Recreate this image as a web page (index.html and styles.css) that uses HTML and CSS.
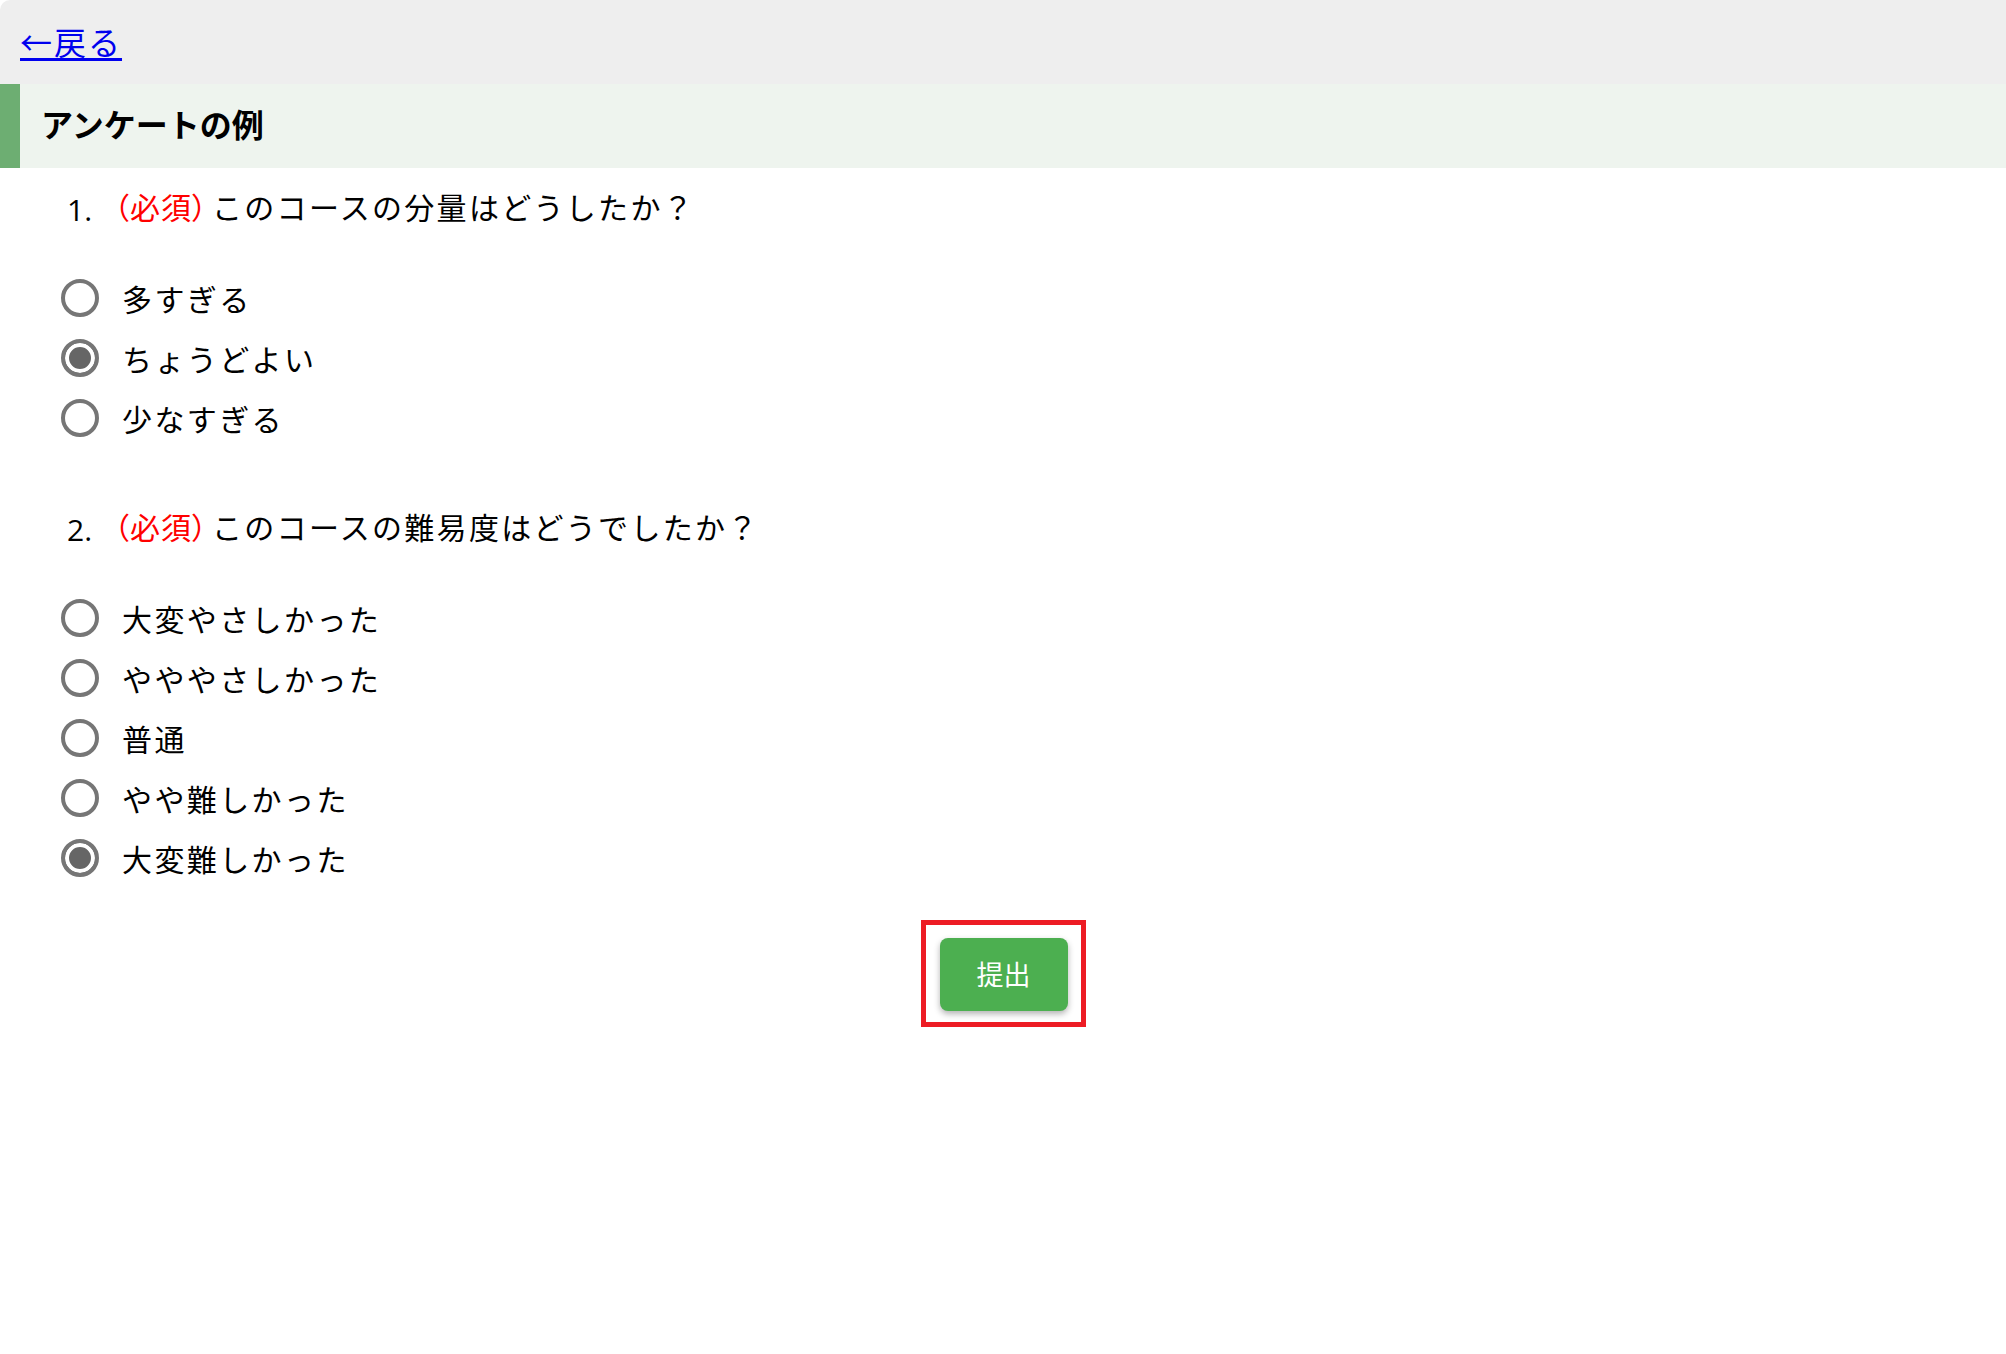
FILE: index.html
```html
<!DOCTYPE html>
<html lang="ja">
<head>
    <meta charset="UTF-8">
    <meta name="viewport" content="width=device-width, initial-scale=1.0">
    <title>アンケートの例</title>
    <link rel="stylesheet" href="styles.css">
</head>
<body>
    <header class="topbar">
        <a href="#" class="back-link">←戻る</a>
    </header>

    <div class="page-title">
        <h1>アンケートの例</h1>
    </div>

    <form id="surveyForm" class="survey">
        <div class="question">
            <p class="question-text"><span class="num">1.</span><span class="required">（必須）</span>このコースの分量はどうしたか？</p>
            <label class="option"><input type="radio" name="q1" value="1"><span>多すぎる</span></label>
            <label class="option"><input type="radio" name="q1" value="2" checked><span>ちょうどよい</span></label>
            <label class="option"><input type="radio" name="q1" value="3"><span>少なすぎる</span></label>
        </div>

        <div class="question">
            <p class="question-text"><span class="num">2.</span><span class="required">（必須）</span>このコースの難易度はどうでしたか？</p>
            <label class="option"><input type="radio" name="q2" value="1"><span>大変やさしかった</span></label>
            <label class="option"><input type="radio" name="q2" value="2"><span>やややさしかった</span></label>
            <label class="option"><input type="radio" name="q2" value="3"><span>普通</span></label>
            <label class="option"><input type="radio" name="q2" value="4"><span>やや難しかった</span></label>
            <label class="option"><input type="radio" name="q2" value="5" checked><span>大変難しかった</span></label>
        </div>

        <div class="submit-row">
            <div class="highlight">
                <button type="submit">提出</button>
            </div>
        </div>
    </form>
</body>
</html>
```

FILE: styles.css
```css
/* General Styles */
body {
    font-family: "Noto Sans CJK JP", "Noto Sans", sans-serif;
    margin: 0;
    padding: 0;
    background: #fff;
    color: #000;
}

.topbar {
    background: #eeeeee;
    height: 84px;
    display: flex;
    align-items: center;
    padding-left: 20px;
    padding-bottom: 3px;
    box-sizing: border-box;
    border-top-left-radius: 10px;
}

.back-link {
    color: #0000ee;
    font-size: 32px;
    letter-spacing: 2px;
    text-underline-offset: 3px;
}

.page-title {
    background: #eef4ee;
    border-left: 20px solid #6dae72;
    height: 84px;
    display: flex;
    align-items: center;
    padding-left: 21px;
    padding-bottom: 6px;
    box-sizing: border-box;
}

.page-title h1 {
    margin: 0;
    font-size: 32px;
    font-weight: 700;
}

.survey {
    padding-top: 8px;
}

.question {
    margin-bottom: 48px;
}

.question-text {
    margin: 0 0 32px;
    height: 60px;
    display: flex;
    align-items: center;
    font-size: 30px;
    letter-spacing: 2.3px;
}

.num {
    font-family: "Open Sans", "Noto Sans", sans-serif;
    font-size: 30px;
    width: 47px;
    padding-left: 67px;
    box-sizing: content-box;
    letter-spacing: 0;
    position: relative;
    top: 3px;
}

.required {
    color: #ff0000;
    font-feature-settings: "palt";
    letter-spacing: 1px;
    margin-right: 4px;
}

.option {
    display: flex;
    align-items: center;
    height: 60px;
    padding-left: 61px;
    font-size: 30px;
    letter-spacing: 2.4px;
}

.option input {
    appearance: none;
    width: 38px;
    height: 38px;
    margin: 0 23px 0 0;
    border: 4px solid #767676;
    border-radius: 50%;
    background: #fff;
    box-sizing: border-box;
    flex-shrink: 0;
}

.option input:checked {
    background: #666;
    box-shadow: inset 0 0 0 4px #fff;
}

.submit-row {
    display: flex;
    justify-content: center;
    margin-top: -16px;
}

.highlight {
    border: 5px solid #ed1c24;
    padding: 13px 13px 11px 14px;
}

button {
    display: block;
    width: 128px;
    height: 73px;
    font-family: "Noto Sans CJK JP", sans-serif;
    font-size: 27px;
    color: #fff;
    background: #4caf50;
    border: none;
    border-radius: 8px;
    box-shadow: 0 3px 6px rgba(0, 0, 0, 0.3);
    padding-bottom: 3px;
    cursor: pointer;
}
```
